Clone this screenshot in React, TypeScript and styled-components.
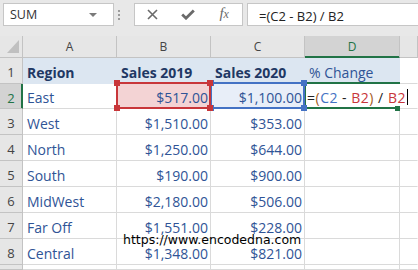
import React from "react";
import styled, { createGlobalStyle, css } from "styled-components";

const GlobalStyle = createGlobalStyle`
  html, body {
    margin: 0;
    padding: 0;
    background: #fff;
  }
  body {
    font-family: "Open Sans", "Liberation Sans", sans-serif;
  }
`;

const RED = "#c8363a";
const BLUE = "#4472c4";
const GREEN = "#217346";
const GRID = "#dadada";
const HEAD_LINE = "#c3c3c3";

const Window = styled.div`
  position: relative;
  width: 418px;
  height: 270px;
  overflow: hidden;
  background: #fff;
`;

const FormulaBar = styled.div`
  display: flex;
  align-items: flex-start;
  height: 36px;
  padding: 3px 0 0 3px;
  box-sizing: border-box;
  background: #e8e8e8;
`;

const NameBox = styled.div`
  display: flex;
  align-items: center;
  justify-content: space-between;
  width: 111px;
  height: 23px;
  box-sizing: border-box;
  padding: 0 16px 0 6px;
  background: #fff;
  border: 1px solid #c6c6c6;
  font-size: 12.5px;
  color: #333;
`;

const Caret = styled.span`
  width: 0;
  height: 0;
  border-left: 4px solid transparent;
  border-right: 4px solid transparent;
  border-top: 4px solid #7a7a7a;
`;

const Grip = styled.div`
  display: flex;
  flex-direction: column;
  gap: 2px;
  margin: 7px 14px 0 4px;

  i {
    display: block;
    width: 2px;
    height: 2px;
    background: #9c9c9c;
  }
`;

const ButtonBox = styled.div`
  display: grid;
  grid-template-columns: repeat(3, 1fr);
  width: 109px;
  height: 23px;
  box-sizing: border-box;
  background: #fff;
  border: 1px solid #c6c6c6;
`;

const BarButton = styled.div`
  display: flex;
  align-items: center;
  justify-content: center;
  color: #6a6a6a;
`;

const Fx = styled.span`
  font-family: "Liberation Serif", "DejaVu Serif", serif;
  font-style: italic;
  font-size: 15px;
  color: #6a6a6a;
  margin-top: -2px;

  small {
    font-size: 12px;
  }
`;

const FormulaInput = styled.div`
  flex: 1;
  height: 23px;
  box-sizing: border-box;
  margin-left: 4px;
  margin-right: -2px;
  padding: 2px 0 0 11px;
  display: flex;
  align-items: center;
  background: #fff;
  border: 1px solid #c6c6c6;
  font-size: 13px;
  color: #222;
  white-space: pre;
`;

const Sheet = styled.div`
  display: grid;
  grid-template-columns: 23px 94px 94px 94px 95px 1fr;
  grid-template-rows: 22px 26px 25px 26px 26px 26px 26px 26px 26px 1fr;
  height: 234px;
`;

const headBase = css`
  display: flex;
  align-items: center;
  justify-content: center;
  box-sizing: border-box;
  background: #e6e6e6;
  color: #444;
  font-size: 12px;
`;

const Corner = styled.div`
  ${headBase};
  align-items: flex-end;
  justify-content: flex-end;
  padding: 0 3px 4px 0;
  border-right: 1px solid ${HEAD_LINE};
  border-bottom: 1px solid ${HEAD_LINE};
`;

const SelectAll = styled.span`
  width: 0;
  height: 0;
  border-left: 12px solid transparent;
  border-bottom: 13px solid #c0c0c0;
`;

const ColHead = styled.div<{ $active?: boolean }>`
  ${headBase};
  border-right: 1px solid ${HEAD_LINE};
  border-bottom: 1px solid ${HEAD_LINE};
  ${(p) =>
    p.$active &&
    css`
      background: #d3d3d3;
      color: ${GREEN};
      border-bottom-color: ${GREEN};
      box-shadow: inset 0 -1px 0 ${GREEN};
    `}
`;

const RowHead = styled.div<{ $active?: boolean }>`
  ${headBase};
  padding-top: 3px;
  border-right: 1px solid ${HEAD_LINE};
  border-bottom: 1px solid ${HEAD_LINE};
  font-size: 13px;
  ${(p) =>
    p.$active &&
    css`
      background: #d3d3d3;
      color: ${GREEN};
      border-right-color: ${GREEN};
      box-shadow: inset -1px 0 0 ${GREEN};
    `}
`;

const Cell = styled.div<{
  $fill?: string;
  $right?: boolean;
  $bold?: boolean;
  $z?: number;
  $last?: boolean;
}>`
  position: relative;
  z-index: ${(p) => p.$z ?? "auto"};
  display: flex;
  align-items: center;
  justify-content: ${(p) => (p.$right ? "flex-end" : "flex-start")};
  min-width: 0;
  box-sizing: border-box;
  padding: 3px 2px 0 4px;
  background: ${(p) => p.$fill ?? "transparent"};
  border-right: 1px solid ${(p) => (p.$last ? "transparent" : p.$fill ?? GRID)};
  border-bottom: 1px solid ${(p) => p.$fill ?? GRID};
  color: #2f5496;
  font-size: 14px;
  font-weight: ${(p) => (p.$bold ? 700 : 400)};
  white-space: nowrap;
`;

const HeaderText = styled.span<{ $bold?: boolean }>`
  color: ${(p) => (p.$bold ? "#1f3864" : "#2f5496")};
`;

const RefBox = styled.span<{ $color: string; $open?: boolean }>`
  position: absolute;
  top: -2px;
  left: -1px;
  right: -1px;
  bottom: -1px;
  border: 2px solid ${(p) => p.$color};
  ${(p) => p.$open && "border-right: none;"}
  pointer-events: none;
`;

type Corner = "tl" | "tr" | "bl" | "br";

const Handle = styled.span<{ $color: string; $at: Corner }>`
  position: absolute;
  width: 6px;
  height: 6px;
  background: ${(p) => p.$color};
  ${(p) => (p.$at[0] === "t" ? "top: -4px;" : "bottom: -3px;")}
  ${(p) => (p.$at[1] === "l" ? "left: -3px;" : "right: -3px;")}
`;

const FillHandle = styled.span`
  position: absolute;
  right: -1px;
  bottom: -3px;
  width: 5px;
  height: 5px;
  background: ${GREEN};
`;

const EditText = styled.span`
  flex-shrink: 0;
  margin-left: -2px;
  color: #222;
  letter-spacing: 0.5px;
`;

const Tok = styled.span<{ $c: string }>`
  color: ${(p) => p.$c};
`;

const TextCursor = styled.span`
  flex-shrink: 0;
  width: 1px;
  height: 16px;
  margin-left: 1px;
  margin-bottom: 2px;
  background: #000;
`;

const Watermark = styled.div`
  position: absolute;
  left: 123px;
  top: 232px;
  z-index: 10;
  font-family: "DejaVu Sans", Verdana, sans-serif;
  font-size: 12.5px;
  line-height: 15px;
  color: #000;
`;

const rows: [string, string, string][] = [
  ["West", "$1,510.00", "$353.00"],
  ["North", "$1,250.00", "$644.00"],
  ["South", "$190.00", "$900.00"],
  ["MidWest", "$2,180.00", "$506.00"],
  ["Far Off", "$1,551.00", "$228.00"],
  ["Central", "$1,348.00", "$821.00"],
];

const corners: Corner[] = ["tl", "tr", "bl", "br"];

const XIcon = () => (
  <svg width="11" height="11" viewBox="0 0 11 11">
    <path d="M1 1L10 10M10 1L1 10" stroke="#6a6a6a" strokeWidth="1.6" fill="none" />
  </svg>
);

const CheckIcon = () => (
  <svg width="14" height="11" viewBox="0 0 14 11">
    <path d="M1.2 5.6L5 9.2L12.8 1.4" stroke="#6a6a6a" strokeWidth="2.8" fill="none" />
  </svg>
);

const HEAD_FILL = "#dce6f1";

export default function App() {
  return (
    <Window>
      <GlobalStyle />
      <FormulaBar>
        <NameBox>
          <span>SUM</span>
          <Caret />
        </NameBox>
        <Grip>
          <i />
          <i />
          <i />
        </Grip>
        <ButtonBox>
          <BarButton>
            <XIcon />
          </BarButton>
          <BarButton>
            <CheckIcon />
          </BarButton>
          <BarButton>
            <Fx>
              f<small>x</small>
            </Fx>
          </BarButton>
        </ButtonBox>
        <FormulaInput>=(C2 - B2) / B2</FormulaInput>
      </FormulaBar>

      <Sheet>
        <Corner>
          <SelectAll />
        </Corner>
        <ColHead>A</ColHead>
        <ColHead>B</ColHead>
        <ColHead>C</ColHead>
        <ColHead $active>D</ColHead>
        <ColHead />

        <RowHead>1</RowHead>
        <Cell $fill={HEAD_FILL} $bold>
          <HeaderText $bold>Region</HeaderText>
        </Cell>
        <Cell $fill={HEAD_FILL} $bold>
          <HeaderText $bold>Sales 2019</HeaderText>
        </Cell>
        <Cell $fill={HEAD_FILL} $bold>
          <HeaderText $bold>Sales 2020</HeaderText>
        </Cell>
        <Cell $fill={HEAD_FILL}>
          <HeaderText>% Change</HeaderText>
        </Cell>
        <Cell $last />

        <RowHead $active>2</RowHead>
        <Cell>East</Cell>
        <Cell $right $fill="#f3d3d4" $z={4}>
          $517.00
          <RefBox $color={RED} />
          {corners.map((c) => (
            <Handle key={c} $color={RED} $at={c} />
          ))}
        </Cell>
        <Cell $right $fill="#e8eef8" $z={3}>
          $1,100.00
          <RefBox $color={BLUE} />
          {corners.map((c) => (
            <Handle key={c} $color={BLUE} $at={c} />
          ))}
        </Cell>
        <Cell $z={2} $last>
          <EditText>
            =<Tok $c="#a35a1c">(</Tok>
            <Tok $c={BLUE}>C2</Tok> - <Tok $c={RED}>B2</Tok>
            <Tok $c="#a35a1c">)</Tok> / <Tok $c={RED}>B2</Tok>
          </EditText>
          <TextCursor />
          <RefBox $color={GREEN} $open />
          <FillHandle />
        </Cell>
        <Cell $last />

        {rows.map(([region, s19, s20], i) => (
          <React.Fragment key={region}>
            <RowHead>{i + 3}</RowHead>
            <Cell>{region}</Cell>
            <Cell $right>{s19}</Cell>
            <Cell $right>{s20}</Cell>
            <Cell />
            <Cell $last />
          </React.Fragment>
        ))}

        <RowHead />
        <Cell />
        <Cell />
        <Cell />
        <Cell />
        <Cell $last />
      </Sheet>

      <Watermark>https://www.encodedna.com</Watermark>
    </Window>
  );
}
